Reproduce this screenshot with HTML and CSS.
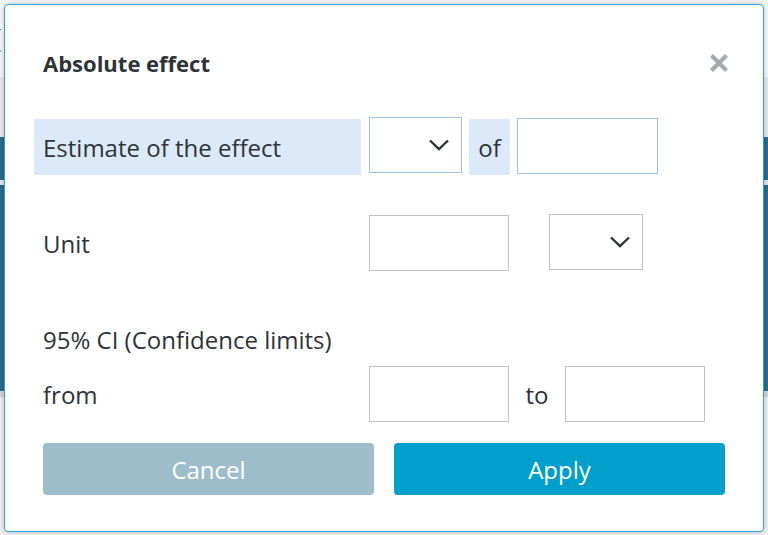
FILE: index.html
```html
<!DOCTYPE html>
<html lang="en">
<head>
<meta charset="utf-8">
<title>Absolute effect</title>
<link rel="stylesheet" href="styles.css">
</head>
<body>
<div class="page">
  <div class="page-top"><span class="paren">(</span></div>
  <div class="page-band"></div>
  <div class="page-teal"><div class="teal-line"></div></div>
  <div class="page-rest"></div>
</div>

<div class="modal">
  <div class="modal-head">
    <h1 class="modal-title">Absolute effect</h1>
    <button class="close" aria-label="Close">
      <svg width="20" height="20" viewBox="0 0 20 20"><path d="M2.5 2.5 L17.5 17.5 M17.5 2.5 L2.5 17.5" stroke="#a4a9ae" stroke-width="4.2" fill="none"/></svg>
    </button>
  </div>

  <div class="row row-estimate">
    <div class="label label-hl">Estimate of the effect</div>
    <div class="select select-blue">
      <svg class="chev" width="22" height="12" viewBox="0 0 22 12"><polyline points="2,1.5 11,10 20,1.5" stroke="#2e3338" stroke-width="2.4" fill="none"/></svg>
    </div>
    <div class="of">of</div>
    <div class="input input-blue"></div>
  </div>

  <div class="row row-unit">
    <div class="label">Unit</div>
    <div class="input"></div>
    <div class="select select-unit">
      <svg class="chev" width="22" height="12" viewBox="0 0 22 12"><polyline points="2,1.5 11,10 20,1.5" stroke="#2e3338" stroke-width="2.4" fill="none"/></svg>
    </div>
  </div>

  <div class="ci">95% CI (Confidence limits)</div>

  <div class="row row-from">
    <div class="label">from</div>
    <div class="input"></div>
    <div class="to">to</div>
    <div class="input"></div>
  </div>

  <div class="actions">
    <button class="btn btn-cancel">Cancel</button>
    <button class="btn btn-apply">Apply</button>
  </div>
</div>
</body>
</html>
```

FILE: styles.css
```css
* { box-sizing: border-box; }

html, body {
  margin: 0;
  padding: 0;
  width: 768px;
  height: 535px;
  overflow: hidden;
  font-family: "Open Sans", "Noto Sans", sans-serif;
  color: #2e3338;
}

.page {
  display: flex;
  flex-direction: column;
  height: 535px;
  background: #f4f4f4;
}
.page-top {
  height: 77px;
  background: #fbfbfb;
  padding-top: 22px;
  font-size: 26px;
  line-height: 30px;
}
.paren { margin-left: -6px; color: #333; }
.page-band { height: 60px; background: #ececec; }
.page-teal {
  height: 254px;
  background: #2c6d8c;
  padding-top: 43px;
}
.teal-line { height: 5px; background: #e8e8e8; }
.page-rest { flex: 1; background: #f2f2f2; border-top: 6px solid #d9d9d9; }

.modal {
  position: absolute;
  left: 4px;
  top: 4px;
  width: 760px;
  height: 528px;
  background: #fff;
  border: 1px solid #2aa6de;
  border-radius: 4px;
  box-shadow: 0 0 6px rgba(0,0,0,0.25);
  padding: 43px 38px 0 38px;
}

.modal-head {
  display: flex;
  justify-content: space-between;
  align-items: center;
  height: 30px;
}
.modal-title {
  margin: 0;
  font-size: 22px;
  font-weight: 700;
  line-height: 30px;
}
.close {
  border: 0;
  background: none;
  padding: 0;
  margin-right: -4px;
  width: 20px;
  height: 20px;
  display: flex;
}

.row {
  display: flex;
  align-items: center;
  height: 56px;
}
.row-estimate { margin-top: 39px; }
.row-unit { margin-top: 42px; }
.row-from { margin-top: 11px; }

.label {
  width: 327px;
  margin-left: -9px;
  padding-left: 9px;
  height: 56px;
  display: flex;
  align-items: center;
  font-size: 24px;
}
.label-hl { background: #dce9f8; margin-top: 4px; }

.select, .input {
  height: 56px;
  border: 1px solid #c2c2c2;
  background: #fff;
}
.select {
  display: flex;
  align-items: center;
  justify-content: flex-end;
  padding-right: 11px;
}
.select-blue { width: 93px; margin-left: 8px; border-color: #9dbfe0; }
.row-estimate .input { width: 141px; border-color: #9dbfe0; margin-top: 2px; }
.of {
  width: 41px;
  height: 56px;
  margin: 4px 7px 0 7px;
  background: #dce9f8;
  display: flex;
  align-items: center;
  justify-content: center;
  font-size: 24px;
}

.row-unit .label, .row-from .label { margin-right: 8px; }
.row-unit .input, .row-from .input { width: 140px; }
.select-unit { width: 94px; margin-left: 40px; margin-top: -2px; }

.to {
  width: 56px;
  text-align: center;
  font-size: 24px;
}

.ci {
  margin-top: 54px;
  height: 30px;
  line-height: 30px;
  font-size: 24px;
}

.actions {
  display: flex;
  gap: 20px;
  margin-top: 21px;
}
.btn {
  flex: 1;
  height: 52px;
  border: 0;
  border-radius: 4px;
  color: #fff;
  font-family: "Open Sans", "Noto Sans", sans-serif;
  font-size: 24px;
}
.btn-cancel { background: #9ebdca; }
.btn-apply { background: #009fcc; }
```
